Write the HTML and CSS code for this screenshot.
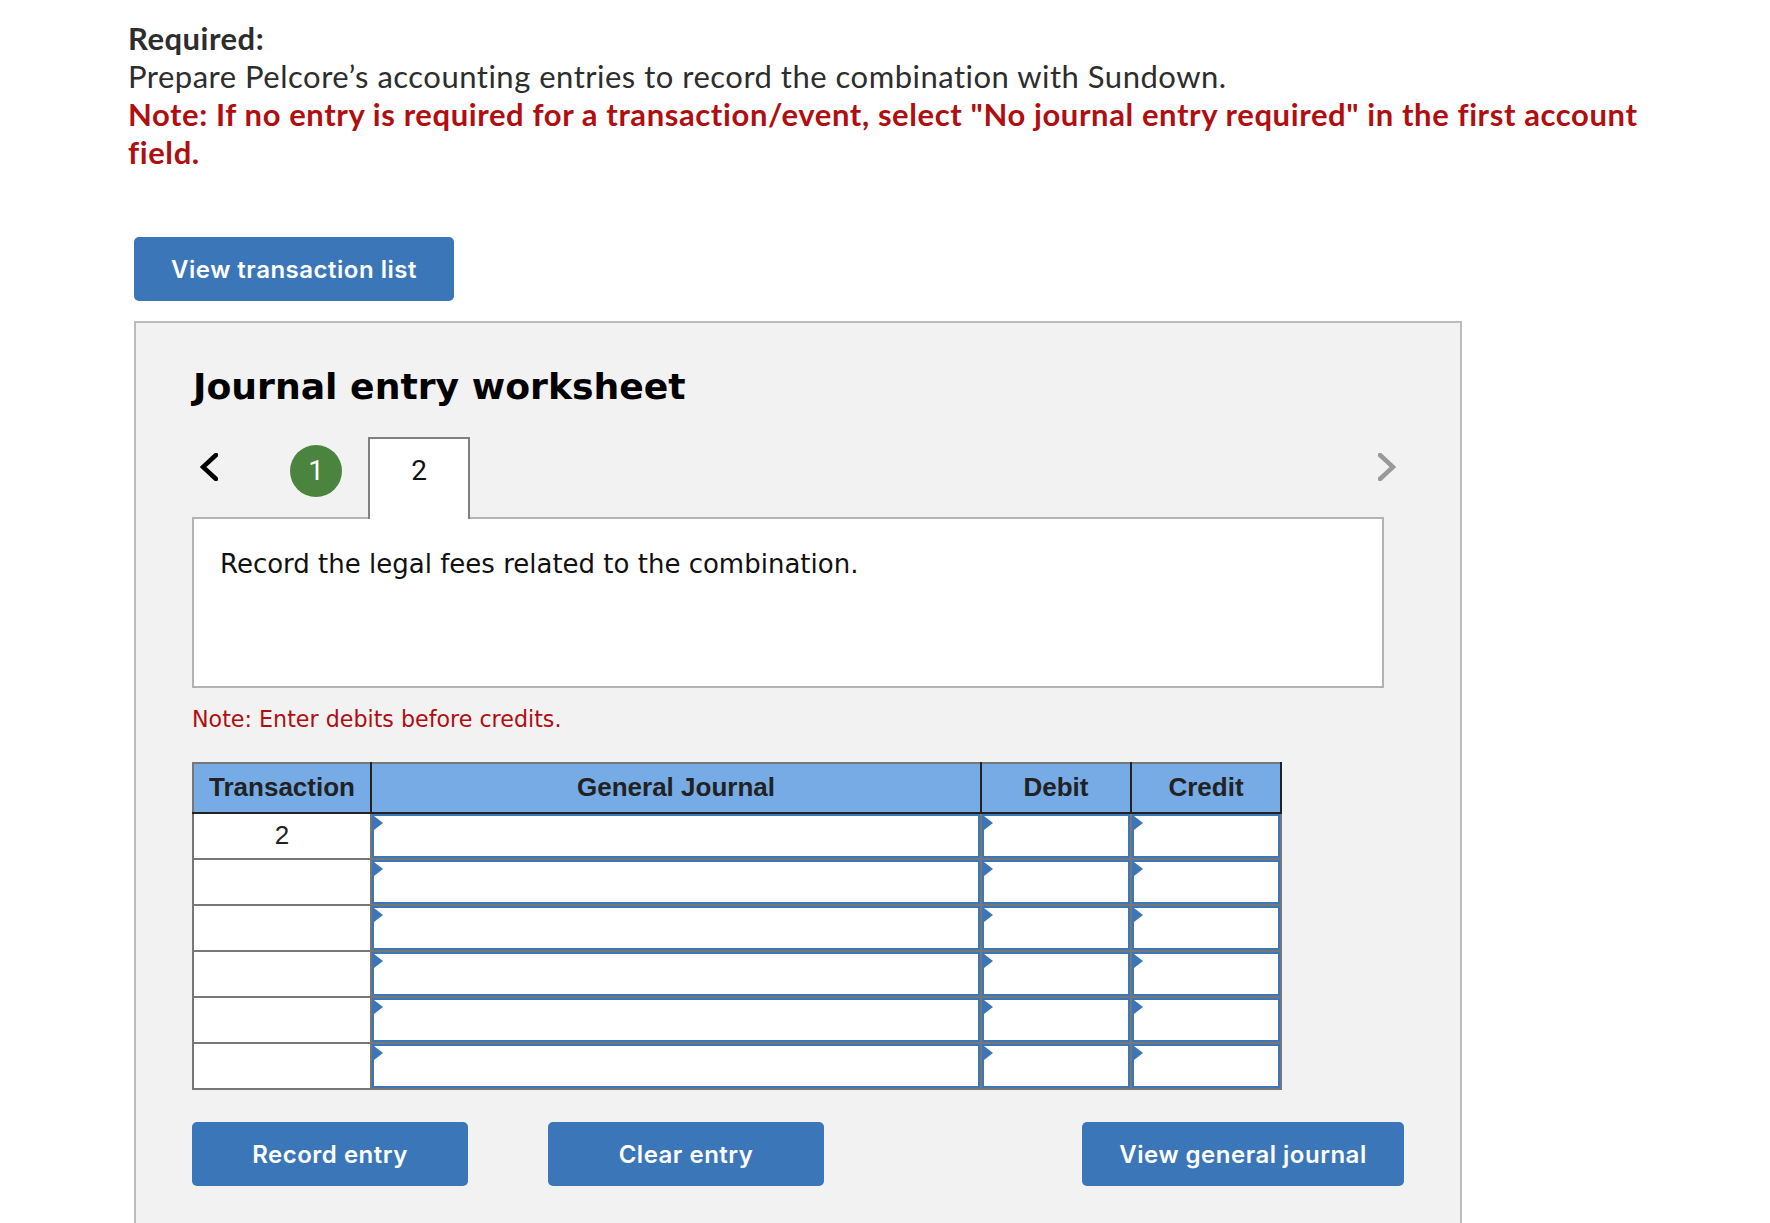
FILE: index.html
```html
<!DOCTYPE html>
<html lang="en">
<head>
<meta charset="utf-8">
<title>Journal entry worksheet</title>
<link rel="stylesheet" href="styles.css">
</head>
<body>
<main class="page">
  <section class="intro">
    <p class="required">Required:</p>
    <p class="prepare">Prepare Pelcore’s accounting entries to record the combination with Sundown.</p>
    <p class="warn">Note: If no entry is required for a transaction/event, select "No journal entry required" in the first account field.</p>
  </section>
  <button class="btn btn-list" type="button">View transaction list</button>
  <section class="panel">
    <h2 class="title">Journal entry worksheet</h2>
    <div class="tabs">
      <svg class="chev chev-left" viewBox="0 0 18 28" width="18" height="28"><path d="M16 2 L3 14 L16 26" fill="none" stroke="#000" stroke-width="4.5" stroke-linecap="round" stroke-linejoin="miter"/></svg>
      <span class="circle">1</span>
      <span class="tab">2</span>
      <svg class="chev chev-right" viewBox="0 0 18 28" width="18" height="28"><path d="M2 2 L15 14 L2 26" fill="none" stroke="#999" stroke-width="4.5" stroke-linecap="round" stroke-linejoin="miter"/></svg>
    </div>
    <div class="desc">Record the legal fees related to the combination.</div>
    <p class="hint">Note: Enter debits before credits.</p>
    <table class="journal">
      <colgroup><col class="c-t"><col class="c-g"><col class="c-d"><col class="c-c"></colgroup>
      <thead><tr><th>Transaction</th><th>General Journal</th><th>Debit</th><th>Credit</th></tr></thead>
      <tbody>
        <tr><td class="num">2</td><td><div class="field"></div></td><td><div class="field"></div></td><td><div class="field"></div></td></tr>
        <tr><td class="num"></td><td><div class="field"></div></td><td><div class="field"></div></td><td><div class="field"></div></td></tr>
        <tr><td class="num"></td><td><div class="field"></div></td><td><div class="field"></div></td><td><div class="field"></div></td></tr>
        <tr><td class="num"></td><td><div class="field"></div></td><td><div class="field"></div></td><td><div class="field"></div></td></tr>
        <tr><td class="num"></td><td><div class="field"></div></td><td><div class="field"></div></td><td><div class="field"></div></td></tr>
        <tr><td class="num"></td><td><div class="field"></div></td><td><div class="field"></div></td><td><div class="field"></div></td></tr>
      </tbody>
    </table>
    <div class="actions">
      <button class="btn btn-record" type="button">Record entry</button>
      <button class="btn btn-clear" type="button">Clear entry</button>
      <button class="btn btn-view" type="button">View general journal</button>
    </div>
  </section>
</main>
</body>
</html>
```
FILE: styles.css
```css
html, body { margin: 0; padding: 0; background: #fff; height: 1223px; overflow: hidden; }
p, h2 { margin: 0; }
.page { padding: 19px 0 0 134px; width: 1328px; }
.intro { margin-left: -6px; width: 1530px; font-family: "Lato", "Liberation Sans", sans-serif; font-size: 31px; letter-spacing: 0.5px; line-height: 38px; color: #2d2d2d; }
.required { font-weight: 700; }
.warn { font-weight: 700; letter-spacing: 0.6px; color: #b00e10; }
.btn { display: block; height: 64px; padding: 1px 0 0; border: 0; border-radius: 5px; background: #3b76b9; color: #fff; font-family: "Inter", "Liberation Sans", sans-serif; font-size: 24px; font-weight: 600; letter-spacing: 0.5px; }
.btn-list { width: 320px; margin-top: 66px; }
.panel { box-sizing: border-box; width: 1328px; height: 906px; margin-top: 20px; padding: 0 0 0 56px; background: #f2f2f2; border: 2px solid #bcbcbc; }
.title { padding: 43px 0 0 1px; font-family: "DejaVu Sans", sans-serif; font-size: 36.2px; line-height: 42px; font-weight: 700; color: #000; }
.tabs { display: flex; align-items: flex-start; width: 1204px; height: 82px; margin-top: 29px; margin-bottom: -2px; position: relative; z-index: 1; }
.chev { flex: none; margin-top: 16px; }
.chev-left { margin-left: 8px; }
.circle { flex: none; width: 52px; height: 52px; margin: 8px 0 0 72px; border-radius: 50%; background: #4b843f; color: #fff; font: 400 28px/52px "Roboto", sans-serif; text-align: center; }
.tab { flex: none; box-sizing: border-box; width: 102px; height: 82px; margin-left: 26px; padding-top: 6px; background: #fff; border: 2px solid #808080; border-bottom: 0; color: #111; font: 400 28px/52px "Roboto", sans-serif; text-align: center; }
.chev-right { margin-left: auto; }
.desc { box-sizing: border-box; width: 1192px; height: 171px; padding: 30px 26px 0; background: #fff; border: 2px solid #b3b3b3; font-family: "DejaVu Sans", sans-serif; font-size: 26px; line-height: 30px; color: #111; }
.hint { margin-top: 17px; font-family: "DejaVu Sans", sans-serif; font-size: 22.2px; line-height: 28px; color: #b00e10; }
.journal { table-layout: fixed; border-collapse: collapse; width: 1088px; margin-top: 29px; font-family: "Liberation Sans", sans-serif; }
.c-t { width: 178px; } .c-g { width: 610px; } .c-d { width: 150px; } .c-c { width: 150px; }
.journal th { box-sizing: border-box; height: 50px; padding: 0 0 2px; background: #76abe5; border: 2px solid #222; border-top-color: #777; border-left-color: #222; color: #222; font-size: 26px; font-weight: 700; text-align: center; }
.journal th:first-child { border-left-color: #777; }
.journal td { height: 44px; padding: 0; background: #fff; border: 2px solid #777; }
.journal td.num { padding-bottom: 2px; box-sizing: border-box; font-size: 26px; text-align: center; color: #222; }
.field { box-sizing: border-box; position: relative; height: 44px; border: 2px solid #3b76b9; }
.field::before { content: ""; position: absolute; left: 0; top: 0; border-left: 9px solid #3b76b9; border-top: 7px solid transparent; border-bottom: 7px solid transparent; }
.actions { display: flex; width: 1212px; margin-top: 32px; }
.btn-record, .btn-clear { width: 276px; }
.btn-clear { margin-left: 80px; }
.btn-view { width: 322px; margin-left: auto; }
```
